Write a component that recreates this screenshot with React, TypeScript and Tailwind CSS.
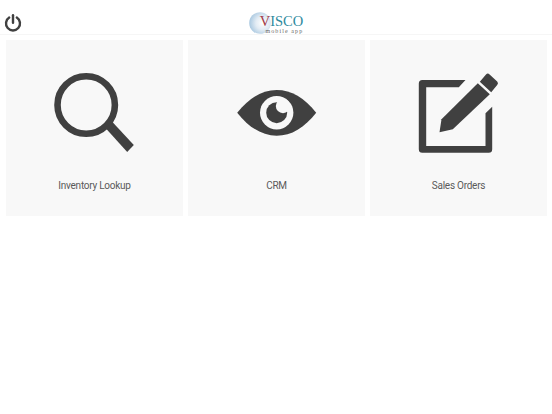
export default function App() {
  const label = "mt-[14px] text-[10px] leading-[14px] tracking-[-0.25px] text-[#5a5a5a] [font-family:'Roboto',sans-serif]";
  const card = "flex h-[176px] w-[177px] flex-col items-center bg-[#f8f8f8] pt-[25px]";
  return (
    <div className="h-[414px] w-[552px] overflow-hidden bg-white">
      <header className="relative flex h-[35px] items-start justify-center border-b border-[#f6f6f6] pt-[12px]">
        <button className="absolute left-[4px] top-[14px] flex h-[18px] w-[18px]">
          <svg width="18" height="18" viewBox="0 0 18 18" fill="none" stroke="#404040" strokeWidth="2.4">
            <path d="M5.2 3.6A7 7 0 1 0 12.8 3.6" strokeLinecap="round" />
            <path d="M9 1.2v7.6" strokeLinecap="round" />
          </svg>
        </button>
        <div className="flex items-start">
          <svg width="22" height="22" viewBox="0 0 22 22" className="mr-[-11px]">
            <defs>
              <radialGradient id="globe" cx="62%" cy="50%" r="62%">
                <stop offset="0" stopColor="#ffffff" />
                <stop offset="0.5" stopColor="#e3ecf4" />
                <stop offset="1" stopColor="#a9c8e0" />
              </radialGradient>
            </defs>
            <circle cx="11" cy="11" r="10.8" fill="url(#globe)" />
          </svg>
          <div className="relative flex flex-col items-end pt-[3px]">
            <div className="text-[14.5px] leading-[13px] [font-family:'Liberation_Serif',serif] text-[#2f8a9e]">
              <span className="text-[#a23a48]">V</span>ISCO
            </div>
            <div className="text-[6px] leading-[6px] tracking-[1.1px] [font-family:'Liberation_Serif',serif] text-[#666666]">mobile app</div>
          </div>
        </div>
      </header>
      <main className="flex gap-[5px] pl-[6px] pt-[5px]">
        <button className={card}>
          <svg width="100" height="100" viewBox="0 0 100 100">
            <circle cx="41.2" cy="40" r="28.7" fill="none" stroke="#404040" strokeWidth="6.6" />
            <path d="M60.5 63 67.2 56.7 88.8 80 82.2 87z" fill="#404040" />
          </svg>
          <span className={label}>Inventory Lookup</span>
        </button>
        <button className={card}>
          <svg width="100" height="100" viewBox="0 0 100 100">
            <path d="M10.2 47.7C22 33 35 25 49.7 25S77.5 33 89.2 47.7C77.5 62.5 64.5 70.7 49.7 70.7S22 62.5 10.2 47.7z" fill="#404040" />
            <circle cx="49.7" cy="47.7" r="16.7" fill="#f8f8f8" />
            <circle cx="49.7" cy="47.7" r="10.5" fill="#404040" />
            <circle cx="56" cy="41" r="7.2" fill="#f8f8f8" />
          </svg>
          <span className={label}>CRM</span>
        </button>
        <button className={card}>
          <svg width="100" height="100" viewBox="0 0 100 100" fill="#404040">
            <path d="M56.5 15H13.3A3.5 3.5 0 0 0 9.8 18.5V84.2A3.5 3.5 0 0 0 13.3 87.7H79.7A3.5 3.5 0 0 0 83.2 84.2V41.7L76.5 48.3V81H17.2V22.3H49.8z" />
            <path d="M30.5 67.3 32.5 54.3 68.8 18.3 80.8 29.3 43.8 64.3z" />
            <path d="M70.8 16.7 77 9.5Q78.8 7.7 80.6 9.5L88.2 16.5Q89.8 18.3 88.2 20.1L82.2 27.3z" />
          </svg>
          <span className={label}>Sales Orders</span>
        </button>
      </main>
    </div>
  );
}
